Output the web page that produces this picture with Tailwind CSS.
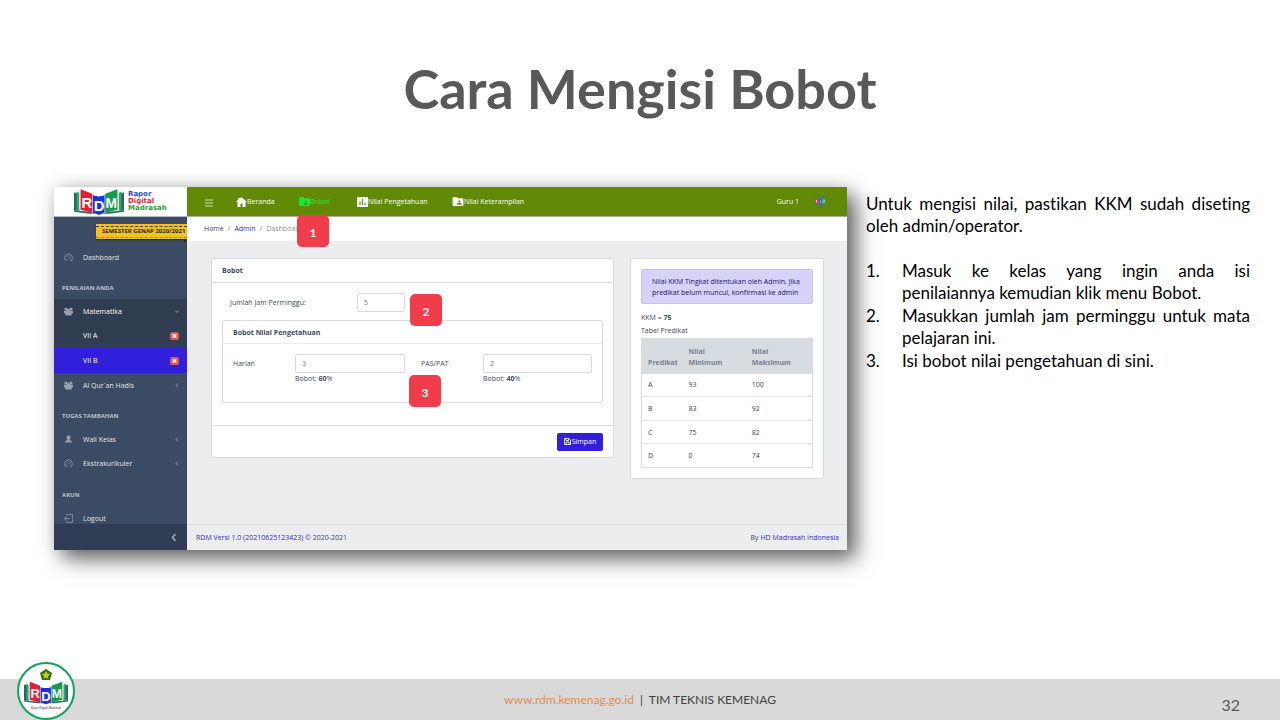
<!DOCTYPE html>
<html lang="id">
<head>
<meta charset="utf-8">
<meta name="viewport" content="width=device-width, initial-scale=1">
<title>Cara Mengisi Bobot</title>
<script src="https://cdn.jsdelivr.net/npm/@tailwindcss/browser@4"></script>
</head>
<body class="flex min-h-screen flex-col bg-white font-['Lato',sans-serif] [font-variant-ligatures:none]">

<svg class="hidden" aria-hidden="true">
  <symbol id="book" viewBox="0 0 98 50">
    <path d="M0 6l8 3v33l-8-1zM98 6l-8 3v33l8-1z" fill="#2b6b5c"/>
    <path d="M0 41l30 3 19 6 19-6 30-3v3l-30 4H30L0 44z" fill="#2b6b5c"/>
    <path d="M5 4l6 4v34l-6-2zM93 4l-6 4v34l6-2z" fill="#35a06b"/>
    <path d="M10 2l6 4v36l-6-3zM88 2l-6 4v36l6-3z" fill="#d5e8df"/>
    <path d="M13 0l23 9v37L13 40z" fill="#e21f36"/>
    <path d="M85 0L61 9v37l24-6z" fill="#169a4c"/>
    <path d="M37 12q12 4 23 0v34l-11 4-12-4z" fill="#1a34dc"/>
    <g fill="#fff" font-family="Liberation Sans, sans-serif" font-weight="700" text-anchor="middle">
      <text x="25" y="36" font-size="29">R</text>
      <text x="49" y="43" font-size="29">D</text>
      <text x="73" y="36" font-size="27">M</text>
    </g>
  </symbol>
  <symbol id="gauge" viewBox="0 0 16 16">
    <path d="M2.500 13A7 7 0 1 1 13.500 13H10.500M2.500 13H5.500M8 10l3-4M3.500 9h1M8 3.500v1M4.500 5.500l1 1M12 9h.8" fill="none" stroke="currentColor" stroke-width="1.500"/>
  </symbol>
  <symbol id="people" viewBox="0 0 16 16">
    <circle cx="3.500" cy="3.500" r="2.700"/><circle cx="12.500" cy="3.500" r="2.700"/><circle cx="8" cy="6" r="3"/>
    <path d="M0 6.500h16v4l-2 1.500-1 3H3l-1-3-2-1.500z"/>
  </symbol>
  <symbol id="folder" viewBox="0 0 24 20">
    <path fill-rule="evenodd" d="M2 0h7l3 3h10a2 2 0 0 1 2 2v13a2 2 0 0 1-2 2H2a2 2 0 0 1-2-2V2a2 2 0 0 1 2-2zM15 7a2.500 2.500 0 1 0 .1 0zM10 17h10v-1.500c0-2-3-3-5-3s-5 1-5 3z"/>
  </symbol>
  <symbol id="left" viewBox="0 0 8 12"><path d="M6 1.500L2 6l4 4.500" fill="none" stroke="currentColor" stroke-width="2.300"/></symbol>
</svg>

<header class="flex h-[187px] items-start justify-center pt-14">
  <h1 class="text-[54px] leading-[66px] font-bold text-[#595959]">Cara Mengisi Bobot</h1>
</header>

<main class="grid flex-1 grid-cols-[793fr_384fr] items-start gap-[19px] pr-[30px] pl-[54px]">

  <section class="relative flex bg-[#ebedef] font-['Open_Sans',sans-serif] text-[7px] leading-[11px] text-[#3c4b64] shadow-[9px_9px_20px_rgba(0,0,0,0.6),0_0_16px_rgba(0,0,0,0.12)]">
    <aside class="flex w-[133px] shrink-0 flex-col bg-[#3c4b64] text-[#e3e6ea]">
      <a href="#" class="flex h-[30px] items-center gap-1 border-b border-[#b5bac2] bg-white pl-5 font-['DejaVu_Sans',sans-serif] text-[7px] leading-[7px] font-bold">
        <svg class="h-[26px] w-[50px]"><use href="#book"/></svg>
        <span class="flex flex-col"><span class="text-[#1f4fd8]">Rapor</span><span class="text-[#e21f36]">Digital</span><span class="text-[#2f9e32]">Madrasah</span></span>
      </a>
      <div class="flex h-7 items-start justify-end pt-[7px]">
        <div class="relative flex h-[15px] w-[91px] items-center bg-[#efc220] pl-[6px] text-[6px] leading-[9px] font-bold whitespace-nowrap text-[#2b2408] shadow-[0_1px_1px_rgba(0,0,0,0.5)]">
          <span class="absolute inset-x-0 top-[2px] border-t border-dashed border-[#4a3c06]"></span>
          <span class="w-full overflow-hidden">SEMESTER GENAP 2020/2021</span>
          <span class="absolute inset-x-0 bottom-[1px] border-t border-dashed border-[#a88a14]"></span>
          <svg class="absolute top-full right-0 h-[4px] w-[3px]" viewBox="0 0 3 4"><path d="M0 0h3v1L0 4z" fill="#20252e"/></svg>
        </div>
      </div>
      <nav class="flex flex-1 flex-col">
        <a href="#" class="flex h-6 items-center gap-[10px] pl-[10px]"><svg class="size-[9px] text-[#8f99a9]"><use href="#gauge"/></svg>Dashboard</a>
        <h2 class="h-[30px] pt-[14px] pl-2 text-[6px] leading-[10px] font-bold text-[#bcc3cd]">PENILAIAN ANDA</h2>
        <div class="bg-[#303c50] text-white">
          <a href="#" class="flex h-6 items-center gap-[10px] pr-2 pl-[10px]"><svg class="size-[9px] fill-[#98a1af]"><use href="#people"/></svg><span class="flex-1">Matematika</span><svg class="h-[5px] w-[4px] -rotate-90 text-[#98a1af]"><use href="#left"/></svg></a>
          <a href="#" class="flex h-[25px] items-center justify-between pr-2 pl-[29px]">VII A<span class="flex h-2 w-[9px] items-center justify-center rounded-[2px] bg-[#e55353] text-[6px] leading-[8px] font-bold">✖</span></a>
          <a href="#" class="flex h-[25px] items-center justify-between bg-[#321fdb] pr-2 pl-[29px]">VII B<span class="flex h-2 w-[9px] items-center justify-center rounded-[2px] bg-[#e55353] text-[6px] leading-[8px] font-bold">✖</span></a>
        </div>
        <a href="#" class="flex h-6 items-center gap-[10px] pr-2 pl-[10px]"><svg class="size-[9px] fill-[#98a1af]"><use href="#people"/></svg><span class="flex-1">Al Qur`an Hadis</span><svg class="h-[5px] w-[4px] text-[#98a1af]"><use href="#left"/></svg></a>
        <h2 class="h-[30px] pt-[14px] pl-2 text-[6px] leading-[10px] font-bold text-[#bcc3cd]">TUGAS TAMBAHAN</h2>
        <a href="#" class="flex h-6 items-center gap-[10px] pr-2 pl-[10px]"><svg class="size-[9px] fill-[#98a1af]" viewBox="0 0 16 16"><path d="M8 1a3.500 3.500 0 0 1 2 6.500V9c2 1 4 1.500 4.500 4.500h-13C2 10.500 4 10 6 9V7.500A3.500 3.500 0 0 1 8 1z"/></svg><span class="flex-1">Wali Kelas</span><svg class="h-[5px] w-[4px] text-[#98a1af]"><use href="#left"/></svg></a>
        <a href="#" class="flex h-[25px] items-center gap-[10px] pr-2 pl-[10px]"><svg class="size-[9px] text-[#8f99a9]"><use href="#gauge"/></svg><span class="flex-1">Ekstrakurikuler</span><svg class="h-[5px] w-[4px] text-[#98a1af]"><use href="#left"/></svg></a>
        <h2 class="h-[30px] pt-[14px] pl-2 text-[6px] leading-[10px] font-bold text-[#bcc3cd]">AKUN</h2>
        <a href="#" class="flex h-[18px] items-end gap-[10px] pl-[10px]"><svg class="mb-[1px] size-[9px] text-[#8f99a9]" viewBox="0 0 16 16"><path d="M5 4V1h10v14H5v-3M1 8h9M4 5L1 8l3 3" fill="none" stroke="currentColor" stroke-width="1.400"/></svg>Logout</a>
      </nav>
      <button type="button" aria-label="Ciutkan menu" class="flex h-[26px] w-full items-center justify-end bg-[#303c54] pr-[10px] text-[#98a1af]"><svg class="h-[9px] w-[6px]"><use href="#left"/></svg></button>
    </aside>

    <div class="flex min-w-0 flex-1 flex-col">
      <div class="flex h-[30px] items-center border-b border-[#a9b58d] bg-[#628a06] pr-5 pl-[17px] text-white">
        <button type="button" aria-label="Menu" class="flex w-8"><svg class="mt-[2px] h-[8px] w-[9px]" viewBox="0 0 9 8"><path d="M1 1h8M1 4h8M1 7h8" stroke="#d5dfbd" stroke-width="1"/></svg></button>
        <a href="#" class="flex w-[63px] items-center"><svg class="h-[10px] w-[11px]" viewBox="0 0 22 20" fill="#fff"><path d="M11 0l11 10h-3v10h-6v-7H9v7H3V10H0L4 6V2h3v2z"/></svg>Beranda</a>
        <a href="#" class="flex w-[58px] items-center text-[#12ec3c]"><svg class="h-[9px] w-[11px] fill-[#12ec3c]"><use href="#folder"/></svg>Bobot</a>
        <a href="#" class="flex w-[95px] items-center"><svg class="h-[10px] w-[11px]" viewBox="0 0 22 20"><rect width="22" height="20" rx="2" fill="#fff"/><path d="M6 9v7M11 4v12M16 12v4" stroke="#5d8d52" stroke-width="2.500"/></svg>Nilai Pengetahuan</a>
        <a href="#" class="flex items-center"><svg class="h-[9px] w-[12px] fill-white"><use href="#folder"/></svg>Nilai Keterampilan</a>
        <a href="#" class="ml-auto flex items-center gap-[15px]">Guru 1<svg class="size-[13px]" viewBox="0 0 26 26"><circle cx="13" cy="13" r="12" fill="#55803a" stroke="#3f8a2c"/><path d="M3 7l7 2v9l-7-2z" fill="#e2405a"/><path d="M10 9h6v10h-6z" fill="#3a4be0"/><path d="M23 7l-7 2v9l7-2z" fill="#35b878"/><path d="M5 10v5M13 11v6M20 10v5" stroke="#e8e8f4" stroke-width="1.500"/></svg></a>
      </div>
      <nav aria-label="Breadcrumb" class="flex h-6 items-center gap-1 bg-white pb-[2px] pl-[17px]">
        <a href="#">Home</a><span class="text-[#8a93a2]">/</span><a href="#" class="text-[#321fdb]">Admin</a><span class="text-[#8a93a2]">/</span><span class="text-[#8a93a2]">Dashboard</span>
      </nav>

      <div class="grid flex-1 grid-cols-[403fr_194fr] items-start gap-4 pt-[17px] pr-[23px] pl-6">
        <form class="rounded-[2px] border border-[#d8dbe0] bg-white">
          <h2 class="flex h-6 items-center border-b border-[#d8dbe0] pl-[10px] font-bold">Bobot</h2>
          <div class="px-[10px] pt-[10px] pb-[22px]">
            <div class="flex items-center pl-2">
              <label for="jam" class="w-[127px]">Jumlah Jam Perminggu:</label>
              <input id="jam" value="5" class="h-[19px] w-12 rounded-[2px] border border-[#d8dbe0] bg-white px-[6px] text-[#768192]">
            </div>
            <fieldset class="mt-2 min-w-0 rounded-[2px] border border-[#d8dbe0]">
              <h3 class="flex h-[23px] items-center border-b border-[#ebedef] pl-[10px] font-bold">Bobot Nilai Pengetahuan</h3>
              <div class="grid grid-cols-[62fr_110fr_16fr_62fr_109fr] items-start px-[10px] pt-[10px] pb-[18px]">
                <label for="harian" class="leading-[19px]">Harian</label>
                <div class="min-w-0"><input id="harian" value="3" class="block h-[19px] w-full rounded-[2px] border border-[#d8dbe0] bg-white px-[6px] text-[#768192]">Bobot: <b>60</b>%</div>
                <span></span>
                <label for="pas" class="leading-[19px]">PAS/PAT</label>
                <div class="min-w-0"><input id="pas" value="2" class="block h-[19px] w-full rounded-[2px] border border-[#d8dbe0] bg-white px-[6px] text-[#768192]">Bobot: <b>40</b>%</div>
              </div>
            </fieldset>
          </div>
          <div class="flex h-8 items-center justify-end border-t border-[#d8dbe0] pr-[10px]">
            <button type="button" class="flex h-[18px] w-[46px] items-center justify-center gap-[1px] rounded-[2px] bg-[#321fdb] text-white"><svg class="size-[7px]" viewBox="0 0 14 14"><path d="M1 1h9l3 3v9H1zM4 1v4h5V1M4 13V8h6v5" fill="none" stroke="#fff" stroke-width="1.700"/></svg>Simpan</button>
          </div>
        </form>

        <div class="rounded-[2px] border border-[#d8dbe0] bg-white p-[10px]">
          <div role="alert" class="rounded-[2px] border border-[#c6c0f5] bg-[#d6d2f8] px-[10px] pt-[6px] pb-[5px] whitespace-nowrap text-[#1b1172]">Nilai KKM Tingkat ditentukan oleh Admin. Jika<br>predikat belum muncul, konfirmasi ke admin</div>
          <p class="mt-2">KKM = <b>75</b></p>
          <p class="mt-[2px]">Tabel Predikat</p>
          <table class="mt-[2px] w-full table-fixed border-collapse border border-[#d8dbe0] text-left">
            <thead class="bg-[#d8dbe0] text-[#768192]">
              <tr class="h-[35px] align-bottom"><th class="w-[24%] pb-[6px] pl-[6px]">Predikat</th><th class="w-[37%] pb-[6px] pl-[6px]">Nilai<br>Minimum</th><th class="pb-[6px] pl-[6px]">Nilai<br>Maksimum</th></tr>
            </thead>
            <tbody>
              <tr class="h-[23px]"><td class="pl-[6px]">A</td><td class="pl-[6px]">93</td><td class="pl-[6px]">100</td></tr>
              <tr class="h-6 border-t border-[#e4e7ea]"><td class="pl-[6px]">B</td><td class="pl-[6px]">83</td><td class="pl-[6px]">92</td></tr>
              <tr class="h-[23px] border-t border-[#e4e7ea]"><td class="pl-[6px]">C</td><td class="pl-[6px]">75</td><td class="pl-[6px]">82</td></tr>
              <tr class="h-6 border-t border-[#e4e7ea]"><td class="pl-[6px]">D</td><td class="pl-[6px]">0</td><td class="pl-[6px]">74</td></tr>
            </tbody>
          </table>
        </div>
      </div>

      <div class="flex h-[26px] items-center justify-between border-t border-[#d8dbe0] pr-2 pl-[9px]">
        <span><a href="#" class="text-[#321fdb]">RDM Versi 1.0 (20210625123423)</a> © 2020-2021</span>
        <span>By <a href="#" class="text-[#321fdb]">HD Madrasah Indonesia</a></span>
      </div>
    </div>

    <span class="absolute top-7 left-[243px] flex size-8 items-center justify-center rounded-[5px] bg-[#f13c4b] pt-[2px] font-['Lato',sans-serif] text-[12px] font-bold text-white">1</span>
    <span class="absolute top-[107px] left-[356px] flex size-8 items-center justify-center rounded-[5px] bg-[#f13c4b] pt-[2px] font-['Lato',sans-serif] text-[12px] font-bold text-white">2</span>
    <span class="absolute top-[188px] left-[355px] flex size-8 items-center justify-center rounded-[5px] bg-[#f13c4b] pt-[2px] font-['Lato',sans-serif] text-[12px] font-bold text-white">3</span>
  </section>

  <section class="pt-[6px] text-justify text-[17px] leading-[22px] text-black">
    <p>Untuk mengisi nilai, pastikan KKM sudah diseting oleh admin/operator.</p>
    <ol class="mt-[23px] flex list-none flex-col gap-[1px]">
      <li class="flex"><span class="w-9 shrink-0">1.</span><span class="flex-1">Masuk ke kelas yang ingin anda isi penilaiannya kemudian klik menu Bobot.</span></li>
      <li class="flex"><span class="w-9 shrink-0">2.</span><span class="flex-1">Masukkan jumlah jam perminggu untuk mata pelajaran ini.</span></li>
      <li class="flex"><span class="w-9 shrink-0">3.</span><span class="flex-1">Isi bobot nilai pengetahuan di sini.</span></li>
    </ol>
  </section>
</main>

<footer class="relative flex h-[41px] items-center justify-center bg-[#d9d9d9] text-[12px] text-[#404040]">
  <svg class="absolute bottom-0 left-[17px] size-[58px]" viewBox="0 0 58 58">
    <circle cx="29" cy="29" r="28" fill="#fff" stroke="#12a45c" stroke-width="2"/>
    <path d="M29 7l6 4-2 7h-8l-2-7z" fill="#2f6b16"/><path d="M29 9l1.500 2.500 3 .5-2.500 2 .5 3-2.500-1.500-2.500 1.500.5-3-2.500-2 3-.5z" fill="#c5c828"/>
    <use href="#book" x="7" y="19" width="44" height="24"/>
    <text x="29" y="47" text-anchor="middle" font-family="Liberation Serif, serif" font-style="italic" font-size="3" fill="#222">Rapor Digital Madrasah</text>
  </svg>
  <p><a href="#" class="text-[#e58b52]">www.rdm.kemenag.go.id</a> &nbsp;|&nbsp; TIM TEKNIS KEMENAG</p>
  <span class="absolute right-10 bottom-[5px] text-[16px] leading-5 text-[#595959]">32</span>
</footer>
</body>
</html>
